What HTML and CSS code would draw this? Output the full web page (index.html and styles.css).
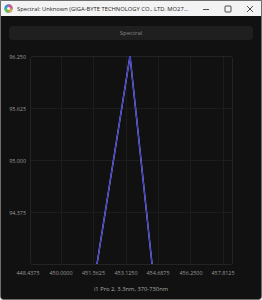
FILE: index.html
```html
<!DOCTYPE html>
<html lang="en">
<head>
  <meta charset="UTF-8">
  <title>Spectral</title>
  <link rel="stylesheet" href="styles.css">
</head>
<body>
  <div class="window">
    <div class="titlebar">
      <svg class="app-icon" width="9" height="9" viewBox="0 0 10 10">
        <circle cx="5" cy="5" r="4.6" fill="#3f8fd8"/>
        <path d="M5 5 L5 0.4 A4.6 4.6 0 0 1 9.6 5 Z" fill="#e24f8c"/>
        <path d="M5 5 L9.6 5 A4.6 4.6 0 0 1 5 9.6 Z" fill="#f0a23a"/>
        <path d="M5 5 L5 9.6 A4.6 4.6 0 0 1 0.4 5 Z" fill="#5cbf5a"/>
        <circle cx="5" cy="5" r="1.6" fill="#f4f4f4"/>
      </svg>
      <span class="title">Spectral: Unknown (GIGA-BYTE TECHNOLOGY CO., LTD. MO27...</span>
      <div class="controls">
        <div class="ctrl">
          <svg width="8" height="8" viewBox="0 0 8 8"><path d="M1 4.5 H7" stroke="#222" stroke-width="0.8"/></svg>
        </div>
        <div class="ctrl">
          <svg width="8" height="8" viewBox="0 0 8 8"><rect x="1" y="1" width="6" height="6" rx="0.8" fill="none" stroke="#222" stroke-width="0.8"/></svg>
        </div>
        <div class="ctrl">
          <svg width="8" height="8" viewBox="0 0 8 8"><path d="M1 1 L7 7 M7 1 L1 7" stroke="#222" stroke-width="0.8"/></svg>
        </div>
      </div>
    </div>

    <div class="content">
      <button class="mode-button">Spectral</button>

      <svg class="chart" width="256" height="252" viewBox="0 0 256 252">
        <!-- plot frame -->
        <rect x="27.5" y="12.5" width="202" height="208" rx="2" fill="#111111" stroke="#242424"/>

        <!-- grid -->
        <g stroke="#1d1d1d" stroke-width="1">
          <line x1="28" y1="64.5" x2="229" y2="64.5"/>
          <line x1="28" y1="116.5" x2="229" y2="116.5"/>
          <line x1="28" y1="168.5" x2="229" y2="168.5"/>
          <line x1="58.5" y1="13" x2="58.5" y2="220"/>
          <line x1="90.5" y1="13" x2="90.5" y2="220"/>
          <line x1="123.5" y1="13" x2="123.5" y2="220"/>
          <line x1="155.5" y1="13" x2="155.5" y2="220"/>
          <line x1="187.5" y1="13" x2="187.5" y2="220"/>
          <line x1="220.5" y1="13" x2="220.5" y2="220"/>
        </g>

        <!-- y axis -->
        <g class="axis-label y-label">
          <text x="23" y="14">96.250</text>
          <text x="23" y="66">95.625</text>
          <text x="23" y="118">95.000</text>
          <text x="23" y="170">94.375</text>
        </g>

        <!-- x axis -->
        <g class="axis-label x-label">
          <text x="25" y="230">448.4375</text>
          <text x="58" y="230">450.0000</text>
          <text x="90.5" y="230">451.5625</text>
          <text x="123" y="230">453.1250</text>
          <text x="155" y="230">454.6875</text>
          <text x="188" y="230">456.2500</text>
          <text x="220" y="230">457.8125</text>
        </g>

        <!-- measured curve -->
        <polyline points="94,220 127,12 149,220" fill="none" stroke="#a4a4f4" stroke-width="1.5"/>
        <polyline points="94,220 127,12 149,220" fill="none" stroke="#2626c4" stroke-width="0.9"/>

        <text class="chart-title" x="128" y="245">i1 Pro 2, 3.3nm, 370-730nm</text>
      </svg>
    </div>
  </div>
</body>
</html>
```

FILE: styles.css
```css
body, html {
  margin: 0;
  padding: 0;
  background-color: #f3f3f3;
  font-family: "Open Sans", "Noto Sans", sans-serif;
}

.window {
  width: 262px;
  height: 300px;
  box-sizing: border-box;
  border: 1px solid #6e6e6e;
  border-radius: 0 0 4px 4px;
  background-color: #111111;
  display: flex;
  flex-direction: column;
  overflow: hidden;
}

.titlebar {
  height: 15px;
  background-color: #f3f3f3;
  display: flex;
  align-items: center;
  padding-left: 3px;
  flex-shrink: 0;
}

.app-icon {
  flex-shrink: 0;
}

.title {
  margin-left: 4px;
  font-size: 5.8px;
  color: #1e1e1e;
  white-space: nowrap;
  flex: 1;
  overflow: hidden;
  text-overflow: ellipsis;
}

.controls {
  display: flex;
  height: 100%;
}

.ctrl {
  width: 22px;
  display: flex;
  align-items: center;
  justify-content: center;
}

.content {
  flex: 1;
  display: flex;
  flex-direction: column;
  padding: 10px 2px 0 2px;
  background-color: #111111;
}

.mode-button {
  margin: 0 6px 0 6px;
  height: 14px;
  border: none;
  border-radius: 4px;
  background-color: #1f1f1f;
  color: #858585;
  font-family: "Open Sans", "Noto Sans", sans-serif;
  font-size: 6px;
  padding: 0;
}

.chart {
  display: block;
  margin-top: 4px;
}

.axis-label text {
  font-family: "Open Sans", "Noto Sans", sans-serif;
  font-size: 5.4px;
  fill: #9a9a9a;
  dominant-baseline: middle;
}

.y-label text {
  text-anchor: end;
}

.x-label text {
  text-anchor: middle;
}

.chart-title {
  font-family: "Open Sans", "Noto Sans", sans-serif;
  font-size: 5.8px;
  fill: #a8a8a8;
  text-anchor: middle;
  dominant-baseline: middle;
}
```
